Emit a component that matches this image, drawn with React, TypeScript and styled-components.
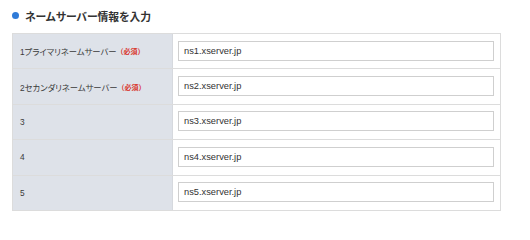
import React from "react";
import styled, { createGlobalStyle } from "styled-components";

const GlobalStyle = createGlobalStyle`
  html, body {
    margin: 0;
    padding: 0;
    background: #ffffff;
  }
  body {
    font-family: "Liberation Sans", "Noto Sans CJK JP", sans-serif;
    color: #333333;
  }
`;

const Page = styled.div`
  width: 530px;
  height: 211px;
  padding: 0 29px 0 12px;
  box-sizing: border-box;
  overflow: hidden;
`;

const Heading = styled.h2`
  display: flex;
  align-items: center;
  gap: 6px;
  height: 33px;
  margin: 0;
  padding-bottom: 2px;
  box-sizing: border-box;
  font-size: 10.8px;
  font-weight: bold;
  font-feature-settings: "palt";
  color: #333333;
`;

const Dot = styled.span`
  width: 7px;
  height: 7px;
  border-radius: 50%;
  background: #2f7bd8;
  flex-shrink: 0;
`;

const Table = styled.div`
  border: 1px solid #dcdcdc;
  border-bottom: none;
`;

const Row = styled.div`
  display: grid;
  grid-template-columns: 160px 1fr;
  height: 35.4px;
  box-sizing: border-box;
  border-bottom: 1px solid #dcdcdc;
`;

const Label = styled.div`
  display: flex;
  align-items: center;
  padding-left: 7px;
  background: #dee2e9;
  border-right: 1px solid #d6d9de;
  font-size: 8.3px;
  font-feature-settings: "palt";
  color: #3a3a3a;
  white-space: nowrap;
`;

const Required = styled.span`
  color: #d9342b;
  font-weight: bold;
  font-size: 7px;
  font-feature-settings: normal;
`;

const Field = styled.div`
  display: flex;
  align-items: center;
  padding: 0 6px 1px 5px;
  background: #ffffff;
`;

const Input = styled.input`
  width: 100%;
  height: 20px;
  box-sizing: border-box;
  border: 1px solid #cfcfcf;
  padding: 0 5px;
  font-family: "Liberation Sans", sans-serif;
  font-size: 9.3px;
  color: #333333;
  background: #ffffff;
  outline: none;
`;

const servers = [
  { label: "1プライマリネームサーバー", required: true, value: "ns1.xserver.jp" },
  { label: "2セカンダリネームサーバー", required: true, value: "ns2.xserver.jp" },
  { label: "3", required: false, value: "ns3.xserver.jp" },
  { label: "4", required: false, value: "ns4.xserver.jp" },
  { label: "5", required: false, value: "ns5.xserver.jp" },
];

export default function App() {
  return (
    <>
      <GlobalStyle />
      <Page>
        <Heading>
          <Dot />
          ネームサーバー情報を入力
        </Heading>
        <Table>
          {servers.map((s) => (
            <Row key={s.value}>
              <Label>
                {s.label}
                {s.required && <Required>（必須）</Required>}
              </Label>
              <Field>
                <Input defaultValue={s.value} readOnly />
              </Field>
            </Row>
          ))}
        </Table>
      </Page>
    </>
  );
}
